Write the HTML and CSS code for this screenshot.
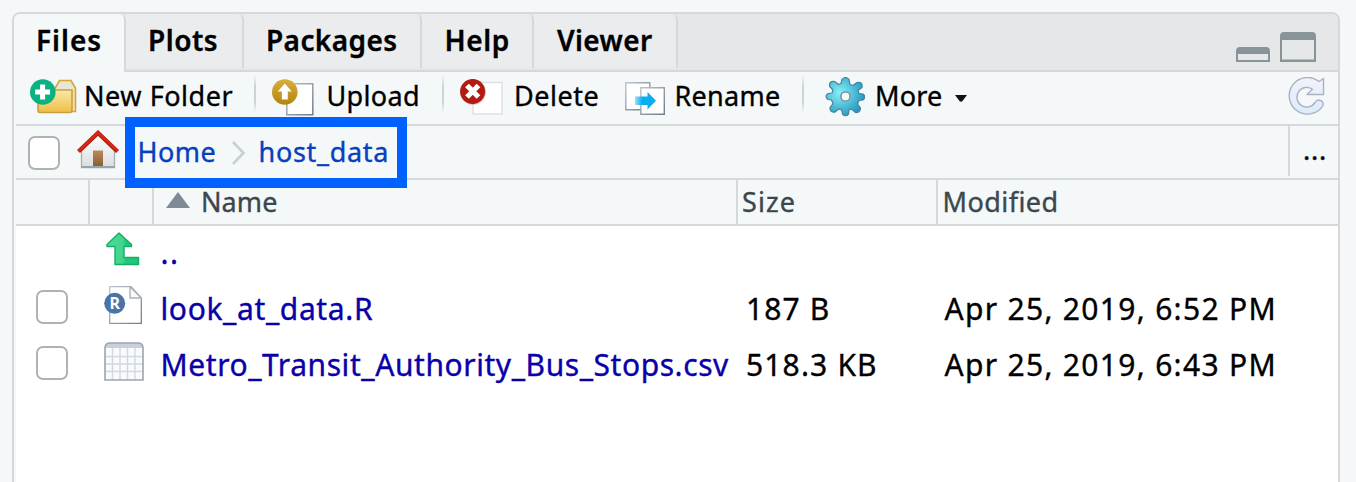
FILE: index.html
```html
<!DOCTYPE html>
<html lang="en">
<head>
<meta charset="utf-8">
<title>Files</title>
<link rel="stylesheet" href="styles.css">
</head>
<body>
<main class="pane">
  <nav class="tabs">
    <div class="tab tab-files active"><span>Files</span></div>
    <div class="tab tab-plots"><span>Plots</span></div>
    <div class="tab tab-packages"><span>Packages</span></div>
    <div class="tab tab-help"><span>Help</span></div>
    <div class="tab tab-viewer"><span>Viewer</span></div>
    <div class="window-controls">
      <svg width="80" height="30" viewBox="0 0 80 30">
        <path fill="#88949a" fill-rule="evenodd" d="M0 30V19q0-4 4-4h26q4 0 4 4v11zM2 22v6h30v-6z"/>
        <path fill="#88949a" fill-rule="evenodd" d="M44 30V4q0-4 4-4h28q4 0 4 4v26zM46 8v19.500h32V8z"/>
      </svg>
    </div>
  </nav>

  <div class="toolbar">
    <div class="tool new-folder">
      <svg width="48" height="40" viewBox="0 0 48 40">
        <defs>
          <linearGradient id="folder" x1="0" y1="0" x2="0" y2="1"><stop offset="0" stop-color="#f7eba8"/><stop offset="1" stop-color="#efbd45"/></linearGradient>
          <linearGradient id="gold" x1="0" y1="0" x2="0" y2="1"><stop offset="0" stop-color="#d9ae3c"/><stop offset="1" stop-color="#b3840f"/></linearGradient>
          <linearGradient id="page" x1="0" y1="0" x2="1" y2="1"><stop offset="0" stop-color="#bcc4cc"/><stop offset="1" stop-color="#6f7d8c"/></linearGradient>
        </defs>
        <path d="M24 13l5.500-9.500h11.500l4.500 7.500v23.500h-4" fill="#f4e3b0" stroke="#cda645" stroke-width="1.600"/>
        <path d="M26 13l5-7h8.500l3 6.500v21h-3V13z" fill="#e6e6e1"/>
        <path d="M8 13h34v20.500q0 2-2 2H10q-2 0-2-2z" fill="url(#folder)" stroke="#cb9f3c" stroke-width="1.600"/>
        <circle cx="12.800" cy="15" r="12.800" fill="#0bb083"/>
        <path d="M10.100 7.500h5v5h5v5h-5v5h-5v-5h-5v-5h5z" fill="#fff"/>
      </svg>
      <span>New Folder</span>
    </div>
    <i class="sep"></i>
    <div class="tool upload">
      <svg width="42" height="40" viewBox="0 0 42 40">
        <path d="M14.800 6.800h26v31h-26z" fill="#fff" stroke="url(#page)" stroke-width="1.500"/>
        <circle cx="12.800" cy="15" r="12.800" fill="url(#gold)"/>
        <path d="M12.800 6.500l7 8h-4v8h-6v-8h-4z" fill="#fff"/>
      </svg>
      <span>Upload</span>
    </div>
    <i class="sep"></i>
    <div class="tool delete">
      <svg width="44" height="40" viewBox="0 0 44 40">
        <path d="M13 5.500h29v31.500h-29z" fill="#fff" stroke="#dbe2e7" stroke-width="1.500"/>
        <circle cx="13" cy="15" r="12.800" fill="#8d2d22" opacity=".3"/>
        <circle cx="12.600" cy="14.500" r="12.500" fill="#b21a12"/>
        <path d="M7 8.500l11.500 11.500M18.500 8.500L7 20" stroke="#fff" stroke-width="5.200"/>
      </svg>
      <span>Delete</span>
    </div>
    <div class="tool rename">
      <svg width="42" height="40" viewBox="0 0 42 40">
        <defs><linearGradient id="cyan"><stop offset="0" stop-color="#9ce0f9"/><stop offset=".35" stop-color="#07aef0"/></linearGradient></defs>
        <path d="M.8 5.800h24v27H.8z" fill="#fff" stroke="url(#page)" stroke-width="1.400"/>
        <path d="M15.800 10.800h23.500v26.500H15.800z" fill="#fff" stroke="url(#page)" stroke-width="1.400"/>
        <path d="M10 19.500h12.500V15l8.500 8.700-8.500 8.800v-4.600H10z" fill="url(#cyan)"/>
      </svg>
      <span>Rename</span>
    </div>
    <i class="sep"></i>
    <div class="tool more">
      <svg width="40" height="42" viewBox="-20.500 -19.500 40 42">
        <defs><radialGradient id="gear" cx=".35" cy=".4" r=".65"><stop offset="0" stop-color="#86f0f5"/><stop offset="1" stop-color="#2798c4"/></radialGradient></defs>
        <path fill="url(#gear)" stroke="#46829a" stroke-width="1.200" stroke-linejoin="round" fill-rule="evenodd" d="M-3.500-17q3.500-4 7 0l1 5 3 1 4-3q6-1 5 5l-4 3 1 3 4 .5q3.500 3 0 6l-4 .5-1.500 3.500 3 4q0 5-5 4.500L6 12.500l-2.500 1L3 17.500q-3 3.500-6 0l-.8-4-3-1-4 3.200q-5 .3-4.700-4.700l3-4L-14 3.500-17.500 3q-4-3 0-6l4-.5 1-3-3.300-3.500q-1-6 5-5l3.800 3 2.500-1zM0-4.500a4.500 4.500 0 1 0 0 9 4.500 4.500 0 0 0 0-9z"/>
        <circle r="5" fill="none" stroke="#77a9b8" stroke-width="1.200"/>
      </svg>
      <span>More</span>
      <svg class="caret" width="12" height="7" viewBox="0 0 12 7"><path d="M0 0h12L7.500 6q-1.500 1.300-3 0z" fill="#111"/></svg>
    </div>
    <svg class="refresh" width="38" height="40" viewBox="0 0 38 40">
      <defs><linearGradient id="ref" x1="0" y1="0" x2="0" y2="1"><stop offset="0" stop-color="#f1f2fb"/><stop offset="1" stop-color="#dcebfc"/></linearGradient></defs>
      <path d="M31 4.500L35.500 1.500v16H19l5.500-5.200A9.800 9.800 0 1 0 27 25.500q2-3.500 5.500-2 4 1.800 2 5.800A18.300 18.300 0 1 1 31 4.500z" fill="url(#ref)" stroke="#a9b2c2" stroke-width="1.400" stroke-linejoin="round"/>
    </svg>
  </div>

  <div class="pathbar">
    <i class="check"></i>
    <svg class="house" width="42" height="40" viewBox="0 0 42 40">
      <defs>
        <linearGradient id="wall" x1="0" y1="0" x2="0" y2="1"><stop offset="0" stop-color="#fff"/><stop offset="1" stop-color="#dbdde0"/></linearGradient>
        <linearGradient id="door" x1="0" y1="0" x2="0" y2="1"><stop offset="0" stop-color="#bb8a5c"/><stop offset="1" stop-color="#8c5c33"/></linearGradient>
      </defs>
      <path d="M4.500 20L21 4l16.500 16v17.500h-33z" fill="url(#wall)" stroke="#a5adb5" stroke-width="1.300"/>
      <path d="M4 37h34" stroke="#99a3ac" stroke-width="2"/>
      <path d="M16 20.500h10V36H16z" fill="url(#door)"/>
      <path d="M1.500 21.500L21 3l19.500 18.500" fill="none" stroke="#a81a0c" stroke-width="4.200"/>
      <path d="M1.500 21L21 2.700 40.500 21" fill="none" stroke="#dc2410" stroke-width="2.800"/>
    </svg>
    <a class="crumb home">Home</a>
    <svg class="chevron" width="14" height="24" viewBox="0 0 14 24"><path d="M1 1l10.500 11L1 23" fill="none" stroke="#c9cfd5" stroke-width="2.600"/></svg>
    <a class="crumb host">host_data</a>
    <span class="browse">...</span>
    <div class="highlight"></div>
  </div>

  <div class="row header">
    <div></div>
    <div></div>
    <div class="h-name"><svg width="24" height="16" viewBox="0 0 24 16"><path d="M0 16L12 0l12 16z" fill="#808a96"/></svg><span>Name</span></div>
    <div class="h-size">Size</div>
    <div class="h-mod">Modified</div>
  </div>

  <div class="list">
    <div class="row item parent">
      <div></div>
      <div><svg class="i-up" width="34" height="34" viewBox="0 0 34 34">
        <defs><linearGradient id="green"><stop offset="0" stop-color="#4fdb98"/><stop offset=".5" stop-color="#3fd48c"/><stop offset=".6" stop-color="#1fc779"/></linearGradient></defs>
        <path d="M13 1L25.500 12.500v2H18V25.500h14.500V32.500H9V14.500H1v-2z" fill="url(#green)" stroke="#18ad66" stroke-width="1.400" stroke-linejoin="round"/></svg></div>
      <div class="name dots">..</div>
      <div></div><div></div>
    </div>
    <div class="row item">
      <div><i class="check"></i></div>
      <div><svg class="i-r" width="38" height="38" viewBox="0 0 38 38">
        <path d="M5.700.7H27L37.300 12v25.300H5.700z" fill="#fff" stroke="url(#page)" stroke-width="1.300"/>
        <path d="M26 .7V12h11.300z" fill="#fafafa" stroke="#a9b0b6" stroke-width="1.300"/>
        <circle cx="10.700" cy="17.300" r="10.500" fill="#4a74a6"/>
        <text x="10.800" y="23.200" text-anchor="middle" class="r-letter">R</text></svg></div>
      <div class="name look">look_at_data.R</div>
      <div class="size">187 B</div>
      <div class="date">Apr 25, 2019, 6:52 PM</div>
    </div>
    <div class="row item">
      <div><i class="check"></i></div>
      <div><svg class="i-csv" width="40" height="39" viewBox="0 0 40 39">
        <path d="M1 38V6q0-5 5-5h28q5 0 5 5v32z" fill="#f8fafc"/>
        <path d="M1 6V6q0-5 5-5h28q5 0 5 5z" fill="#c9d0d8"/>
        <path d="M8.500 6v32M16 6v32M23.500 6v32M31 6v32M1 14.500h38M1 22h38M1 29.500h38" stroke="#d3d8e0" stroke-width="1.400"/>
        <path d="M1 38V6q0-5 5-5h28q5 0 5 5v32z" fill="none" stroke="#9aa5b1" stroke-width="1.600"/></svg></div>
      <div class="name metro">Metro_Transit_Authority_Bus_Stops.csv</div>
      <div class="size kb">518.3 KB</div>
      <div class="date">Apr 25, 2019, 6:43 PM</div>
    </div>
  </div>
</main>
</body>
</html>
```
FILE: styles.css
```css
* { box-sizing: border-box; }
body {
  margin: 0;
  height: 482px;
  overflow: hidden;
  background: #f6f7f9;
  color: #000;
  font: 27px "Noto Sans", sans-serif;
  -webkit-text-stroke: .35px currentColor;
  padding: 12px 16px 0 12px;
}
svg { display: block; flex: none; }
.pane {
  height: 490px;
  border: 2px solid #d5d9dc;
  border-radius: 8px 8px 0 0;
  background: #f4f8f9;
}

/* Tabs */
.tabs {
  display: flex;
  height: 58px;
  background: #e6e7e9;
  border-bottom: 2px solid #d5d9dc;
  border-radius: 6px 6px 0 0;
}
.tab {
  height: 54px;
  border-right: 2px solid #d5d9dc;
  border-radius: 0 6px 0 0;
  background: #ebecee;
  font-size: 28px;
  font-weight: 600;
  line-height: 52px;
  white-space: nowrap;
}
.tab.active { height: 58px; background: #f4f8f9; border-radius: 6px 6px 0 0; }
.tab-files { width: 112px; padding-left: 22px; letter-spacing: 1px; }
.tab-plots { width: 118px; padding-left: 22px; letter-spacing: .5px; }
.tab-packages { width: 178px; padding-left: 22px; letter-spacing: .4px; }
.tab-help { width: 112px; padding-left: 22.500px; letter-spacing: .6px; }
.tab-viewer { width: 144px; padding-left: 23px; letter-spacing: .39px; }
.window-controls { margin: 18px 22px 0 auto; }

/* Toolbar */
.toolbar {
  display: flex;
  height: 54px;
  margin-left: 2px;
  padding-left: 14px;
  border-bottom: 2px solid #d5d9dc;
}
.tool { display: flex; line-height: 47px; white-space: nowrap; }
.tool > svg { margin-top: 5px; }
.new-folder { width: 224px; letter-spacing: .55px; }
.new-folder span { margin-left: 6px; }
.sep { width: 2px; height: 38px; margin-top: 3px; background: linear-gradient(#f4f8f9, #cdd2d5 30%, #cdd2d5 70%, #f4f8f9); }
.upload { width: 171px; margin-left: 16px; letter-spacing: .35px; }
.upload span { margin-left: 12.500px; }
.upload + .sep { margin-left: -1px; }
.delete { width: 165px; margin-left: 16px; letter-spacing: .5px; }
.delete span { margin-left: 10px; }
.rename { width: 177px; letter-spacing: .3px; }
.rename span { margin-left: 7.500px; }
.more { margin-left: 21px; letter-spacing: .2px; }
.more span { margin-left: 10px; }
.more .caret { margin: 23px 0 0 13px; }
.refresh { margin: 5px 12px 0 auto; }

/* Path bar */
.pathbar {
  display: flex;
  position: relative;
  height: 54px;
  margin-left: 2px;
  padding-left: 12px;
  border-bottom: 2px solid #d5d9dc;
  line-height: 51px;
}
.check {
  display: block;
  width: 32px;
  height: 34px;
  border: 2px solid #b2b2b2;
  border-radius: 7px;
  background: #fff;
}
.pathbar .check { margin-top: 10px; }
.house { margin: 4px 0 0 17px; }
.crumb { color: #0640bf; }
.home { width: 94px; margin-left: 18.500px; letter-spacing: .45px; }
.chevron { margin-top: 15px; }
.host { margin-left: 13px; letter-spacing: .7px; }
.browse {
  width: 50px;
  height: 50px;
  margin-left: auto;
  padding-left: 13px;
  border-left: 2px solid #d5d9dc;
  line-height: 48px;
  letter-spacing: .8px;
}
.highlight {
  position: absolute;
  left: 109px;
  top: -9px;
  width: 282px;
  height: 71px;
  border: 10px solid #0061fe;
  z-index: 2;
}

/* File list */
.row { display: grid; grid-template-columns: 74px 64px 584px 200px 1fr; margin-left: 2px; }
.header {
  height: 46px;
  border-bottom: 2px solid #d5d9dc;
  color: #3c474d;
  line-height: 43px;
}
.header > div { border-right: 2px solid #d5d9dc; white-space: nowrap; }
.header > div:last-child { border-right: 0; }
.header .h-name { display: flex; padding-left: 12px; letter-spacing: .1px; }
.h-name svg { margin: 12px 11px 0 0; }
.h-size { padding-left: 4px; letter-spacing: 1.1px; }
.h-mod { padding-left: 4.500px; letter-spacing: .45px; }
.list { height: 264px; margin-left: 2px; background: #fff; }
.item { height: 56px; margin-left: 0; font-size: 30px; line-height: 57px; white-space: nowrap; }
.parent { height: 54px; line-height: 53px; }
.item .check { margin: 10px 0 0 20px; }
.name { padding-left: 6.500px; color: #0a00a8; }
.dots { letter-spacing: 1.5px; }
.look { letter-spacing: .62px; }
.metro { letter-spacing: .56px; }
.size { padding-left: 8px; letter-spacing: 1.1px; }
.kb { letter-spacing: 1.15px; }
.date { padding-left: 6.500px; letter-spacing: 1.3px; }
.i-up { margin: 6px 0 0 16px; }
.i-r { margin: 6px 0 0 14px; }
.i-csv { margin: 6px 0 0 14px; }
.r-letter { font: 700 16px "Noto Sans", sans-serif; fill: #fff; letter-spacing: 0; -webkit-text-stroke: 0; }
```
